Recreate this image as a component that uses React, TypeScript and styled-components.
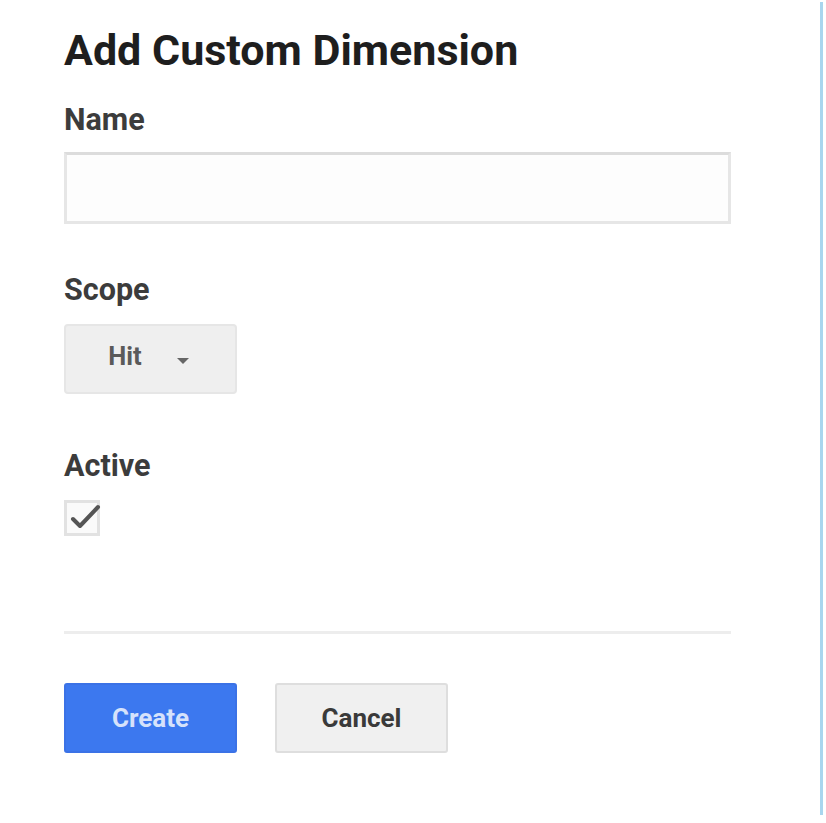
import * as React from 'react';
import styled, { createGlobalStyle } from 'styled-components';

const GlobalStyle = createGlobalStyle`
  html, body {
    margin: 0;
    padding: 0;
    background: #ffffff;
  }
  body {
    font-family: Roboto, 'Liberation Sans', Arial, sans-serif;
  }
`;

const Page = styled.div`
  display: flex;
  width: 826px;
  height: 823px;
  box-sizing: border-box;
  padding-top: 2px;
`;

const Panel = styled.div`
  flex: 1;
  display: flex;
  flex-direction: column;
  padding: 24px 0 0 64px;
  box-sizing: border-box;
`;

const Rule = styled.div`
  width: 3px;
  height: 813px;
  margin-right: 3px;
  background: #a9d6ee;
`;

const Title = styled.h1`
  margin: 0;
  font-size: 43px;
  line-height: 48px;
  font-weight: 700;
  color: #1e1e1e;
`;

const Label = styled.div<{ $top: number }>`
  margin-top: ${p => p.$top}px;
  font-size: 30.5px;
  line-height: 36px;
  font-weight: 700;
  color: #3c3c3c;
`;

const TextField = styled.input`
  margin-top: 14px;
  width: 667px;
  height: 72px;
  box-sizing: border-box;
  border: 3px solid #e6e6e6;
  border-top-color: #dcdcdc;
  background: #fdfdfd;
  outline: none;
`;

const SelectButton = styled.button`
  margin-top: 16px;
  width: 173px;
  height: 70px;
  box-sizing: border-box;
  display: flex;
  align-items: center;
  justify-content: center;
  gap: 35px;
  padding: 0 4px 6px 0;
  background: #efefef;
  border: 2px solid #e6e6e6;
  border-radius: 4px;
  font-family: inherit;
  font-size: 25.5px;
  font-weight: 700;
  color: #5a5a5a;
`;

const Caret = styled.span`
  width: 0;
  height: 0;
  margin-top: 10px;
  border-left: 6px solid transparent;
  border-right: 6px solid transparent;
  border-top: 6px solid #666666;
`;

const CheckBox = styled.svg`
  margin-top: 16px;
  display: block;
  overflow: visible;
`;

const Divider = styled.div`
  margin-top: 95px;
  width: 667px;
  height: 3px;
  background: #ededed;
`;

const Actions = styled.div`
  margin-top: 49px;
  display: flex;
  gap: 38px;
`;

const ActionButton = styled.button<{ $primary?: boolean }>`
  width: 173px;
  height: 70px;
  box-sizing: border-box;
  border-radius: 3px;
  border: 2px solid ${p => (p.$primary ? '#3b72e6' : '#dedede')};
  background: ${p => (p.$primary ? '#3c78ef' : '#f0f0f0')};
  color: ${p => (p.$primary ? '#d6e2fb' : '#3a3a3a')};
  font-family: inherit;
  font-size: 26px;
  font-weight: 700;
`;

export default function App() {
  return (
    <Page>
      <GlobalStyle />
      <Panel>
        <Title>Add Custom Dimension</Title>
        <Label $top={28}>Name</Label>
        <TextField type="text" />
        <Label $top={48}>Scope</Label>
        <SelectButton>
          <span>Hit</span>
          <Caret />
        </SelectButton>
        <Label $top={54}>Active</Label>
        <CheckBox width="36" height="36" viewBox="0 0 36 36">
          <rect x="1.5" y="1.5" width="33" height="33" fill="#fafafa" stroke="#e2e2e2" strokeWidth="3" />
          <path d="M9 19 L16 26 L34 7" fill="none" stroke="#555555" strokeWidth="4" strokeLinecap="round" strokeLinejoin="round" />
        </CheckBox>
        <Divider />
        <Actions>
          <ActionButton $primary>Create</ActionButton>
          <ActionButton>Cancel</ActionButton>
        </Actions>
      </Panel>
      <Rule />
    </Page>
  );
}
